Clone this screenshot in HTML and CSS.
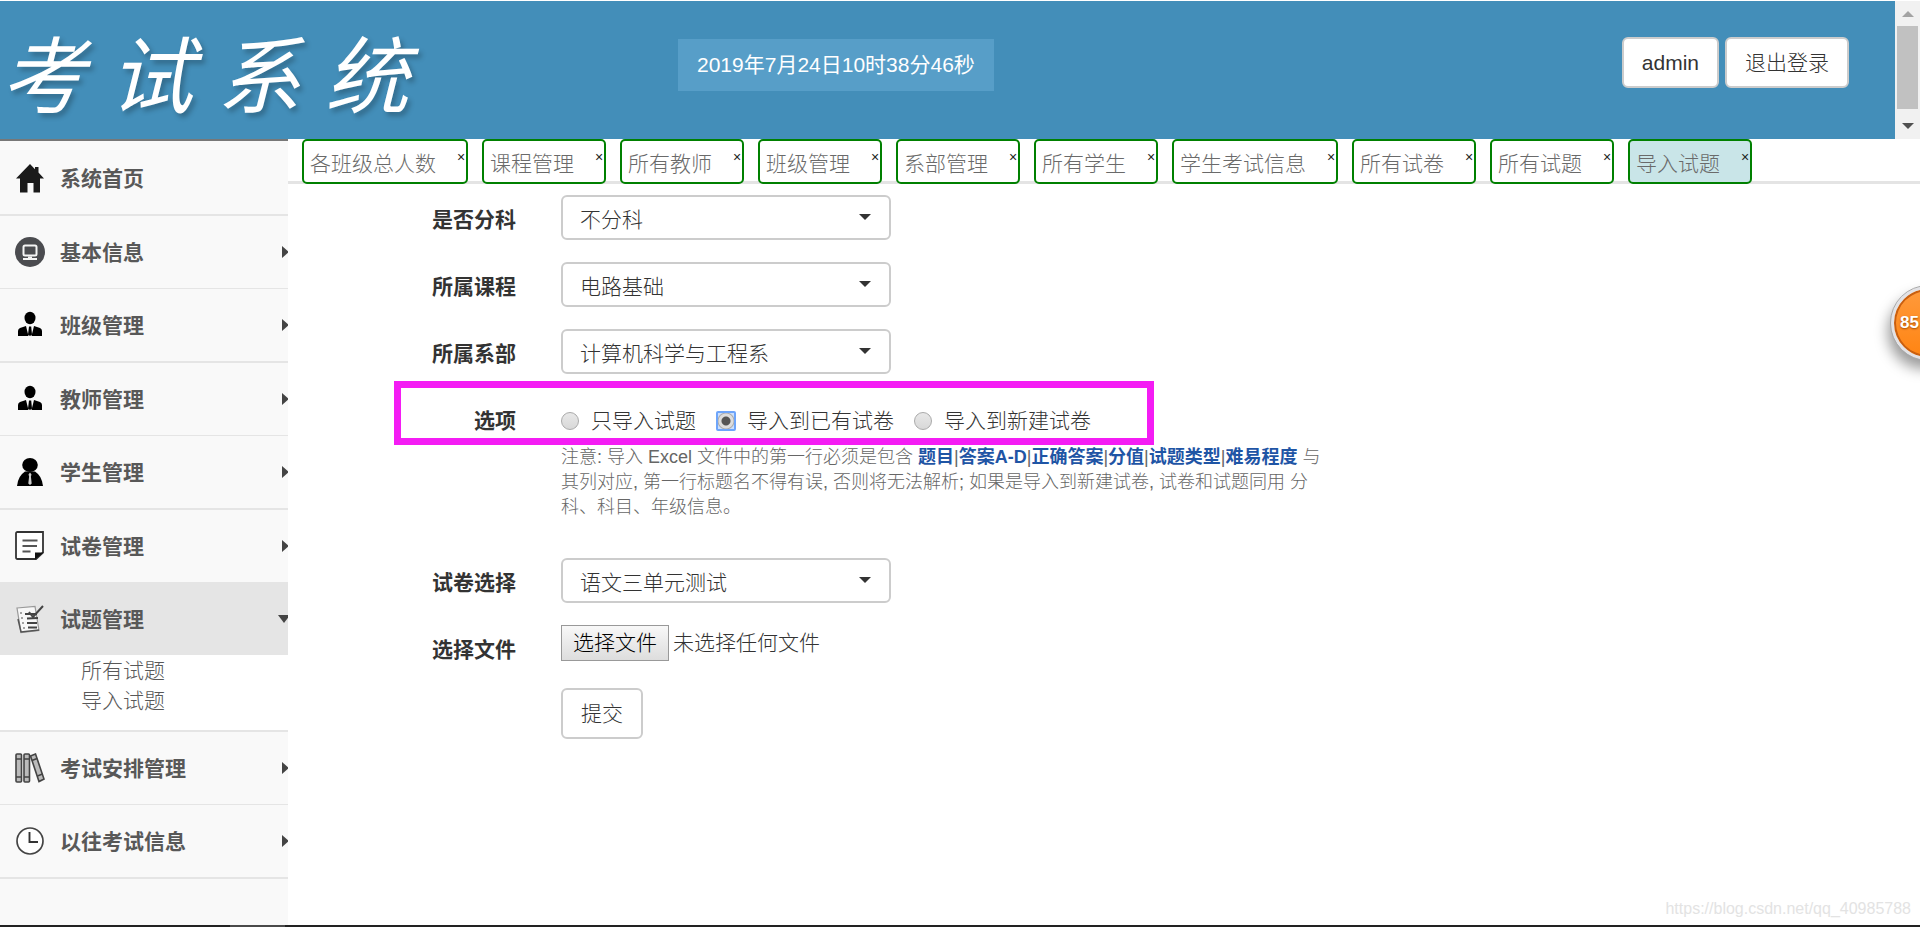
FILE: index.html
```html
<!DOCTYPE html>
<html lang="zh-CN">
<head>
<meta charset="utf-8">
<title>考试系统</title>
<link rel="stylesheet" href="styles.css">
</head>
<body>
<header class="header">
  <div class="banner">
    <h1 class="logo"><span>考</span><span>试</span><span>系</span><span>统</span></h1>
    <div class="clock">2019年7月24日10时38分46秒</div>
    <div class="account">
      <button class="btn" type="button">admin</button>
      <button class="btn" type="button">退出登录</button>
    </div>
  </div>
  <div class="scrollbar" aria-hidden="true">
    <i class="scroll-up"></i><i class="scroll-thumb"></i><i class="scroll-down"></i>
  </div>
</header>

<div class="body">
  <nav class="sidebar">
    <ul class="menu">
      <li class="menu-item thick"><a href="#">
        <svg class="icon" viewBox="0 0 30 30"><path fill="#1a1a1a" d="M15 1 1 15.500h4V29.500h7.500V20h6v9.500H25V15.500h4L23.500 9.500V4H20v2.200z"/></svg>
        <span>系统首页</span></a></li>
      <li class="menu-item"><a href="#">
        <svg class="icon" viewBox="0 0 30 30"><circle cx="15" cy="15" r="15" fill="#4b4c50"/><rect x="8.500" y="8.500" width="13" height="10" rx="1.500" fill="none" stroke="#f5f5f5" stroke-width="2"/><path fill="#f5f5f5" d="M13 19.500h4v1.500h5v2H8v-2h5z"/></svg>
        <span>基本信息</span><i class="arrow"></i></a></li>
      <li class="menu-item thick"><a href="#">
        <svg class="icon" viewBox="0 0 30 30"><ellipse cx="15" cy="8" rx="5.500" ry="6.200"/><path d="M3 26v-5q0-2 2-3l6-2 2.500 10zM27 26v-5q0-2-2-3l-6-2-2.500 10zM14 16.500h2.200l.8 8-2 1.500-2-1.500z"/></svg>
        <span>班级管理</span><i class="arrow"></i></a></li>
      <li class="menu-item"><a href="#">
        <svg class="icon" viewBox="0 0 30 30"><ellipse cx="15" cy="8" rx="5.500" ry="6.200"/><path d="M3 26v-5q0-2 2-3l6-2 2.500 10zM27 26v-5q0-2-2-3l-6-2-2.500 10zM14 16.500h2.200l.8 8-2 1.500-2-1.500z"/></svg>
        <span>教师管理</span><i class="arrow"></i></a></li>
      <li class="menu-item thick"><a href="#">
        <svg class="icon" viewBox="0 0 30 30"><ellipse cx="15" cy="8" rx="7.800" ry="7"/><path d="M2 29q1-10 8-14.500h10q7 4.500 8 14.500z"/><path d="M15 15.500l1.500 2-.6 2 .8 7-1.700 1.500-1.700-1.500.8-7-.6-2z" fill="#ccc"/></svg>
        <span>学生管理</span><i class="arrow"></i></a></li>
      <li class="menu-item"><a href="#">
        <svg class="icon" viewBox="0 0 30 30"><path d="M2.500 1h25.500v20.500L21 28H2.500Q1 28 1 26.500v-24Q1 1 2.500 1z" fill="#fff" stroke="#333" stroke-width="1.800"/><path d="M20 28.500V21.500h8.500z" fill="#111"/><path d="M7.500 9.500h15M7.500 15h14.500M7.500 20.500h8" stroke="#555" stroke-width="2"/></svg>
        <span>试卷管理</span><i class="arrow"></i></a></li>
      <li class="menu-item open"><a href="#">
        <svg class="icon" viewBox="0 0 30 30"><path d="M2 4l18-1.500 4 24L6 28.500z" fill="#f7f7f7" stroke="#999" stroke-width="1.200"/><path d="M3 15l3 13 18-2" fill="none" stroke="#555" stroke-width="1.500"/><path d="M10 10h12M12 14.500l11-.5M12 19h10M13 23.500h9" stroke="#444" stroke-width="2"/><path d="M14 8l4 5L28 2" fill="none" stroke="#444" stroke-width="2"/><path d="M5 9h2M6 14h2M7 19h2M8 24h2" stroke="#888" stroke-width="1.500"/></svg>
        <span>试题管理</span><i class="arrow"></i></a>
        <ul class="submenu">
          <li><a href="#">所有试题</a></li>
          <li><a href="#">导入试题</a></li>
        </ul></li>
      <li class="menu-item"><a href="#">
        <svg class="icon" viewBox="0 0 30 30"><g fill="#bbb" stroke="#444" stroke-width="1.600"><rect x="1" y="1" width="5.500" height="28" rx="1"/><rect x="9" y="1" width="5.500" height="28" rx="1"/><path d="M15.500 3l5-2L29 26l-5 2.500z"/></g><path d="M1 6h5.500M1 24h5.500M9 6h5.500M9 24h5.500M17 7.500l5-2M22.500 23l5-2" stroke="#444" stroke-width="1.400"/></svg>
        <span>考试安排管理</span><i class="arrow"></i></a></li>
      <li class="menu-item thick"><a href="#">
        <svg class="icon" viewBox="0 0 30 30"><circle cx="15" cy="15" r="13" fill="#fff" stroke="#444" stroke-width="1.700"/><path d="M14.500 6v10h8.500" fill="none" stroke="#333" stroke-width="1.900"/></svg>
        <span>以往考试信息</span><i class="arrow"></i></a></li>
    </ul>
  </nav>

  <main class="main">
    <div class="tabs">
      <div class="tab"><a href="#">各班级总人数</a><button class="close" type="button">×</button></div>
      <div class="tab"><a href="#">课程管理</a><button class="close" type="button">×</button></div>
      <div class="tab"><a href="#">所有教师</a><button class="close" type="button">×</button></div>
      <div class="tab"><a href="#">班级管理</a><button class="close" type="button">×</button></div>
      <div class="tab"><a href="#">系部管理</a><button class="close" type="button">×</button></div>
      <div class="tab"><a href="#">所有学生</a><button class="close" type="button">×</button></div>
      <div class="tab"><a href="#">学生考试信息</a><button class="close" type="button">×</button></div>
      <div class="tab"><a href="#">所有试卷</a><button class="close" type="button">×</button></div>
      <div class="tab"><a href="#">所有试题</a><button class="close" type="button">×</button></div>
      <div class="tab active"><a href="#">导入试题</a><button class="close" type="button">×</button></div>
    </div>

    <form class="form">
      <label class="label" for="division">是否分科</label>
      <div class="select"><select id="division"><option>不分科</option></select></div>

      <label class="label" for="course">所属课程</label>
      <div class="select"><select id="course"><option>电路基础</option></select></div>

      <label class="label" for="dept">所属系部</label>
      <div class="select"><select id="dept"><option>计算机科学与工程系</option></select></div>

      <div class="options">
        <span class="label" id="mode">选项</span>
        <div class="radios" role="radiogroup" aria-labelledby="mode">
          <label class="radio"><input type="radio" name="mode">只导入试题</label>
          <label class="radio"><input type="radio" name="mode" checked>导入到已有试卷</label>
          <label class="radio"><input type="radio" name="mode">导入到新建试卷</label>
        </div>
      </div>
      <p class="help">注意: 导入 Excel 文件中的第一行必须是包含 <b>题目</b>|<b>答案A-D</b>|<b>正确答案</b>|<b>分值</b>|<b>试题类型</b>|<b>难易程度</b> 与其列对应, 第一行标题名不得有误, 否则将无法解析; 如果是导入到新建试卷, 试卷和试题同用 分科、科目、年级信息。</p>

      <label class="label" for="paper">试卷选择</label>
      <div class="select"><select id="paper"><option>语文三单元测试</option></select></div>

      <label class="label" for="file">选择文件</label>
      <div class="file">
        <input class="file-input" id="file" type="file">
        <label class="file-btn" for="file">选择文件</label>
        <span>未选择任何文件</span>
      </div>

      <button class="btn submit" type="submit">提交</button>
    </form>
  </main>
</div>

<footer class="taskbar"><i></i></footer>
<div class="ball">85</div>
<div class="watermark">https://blog.csdn.net/qq_40985788</div>
</body>
</html>
```
FILE: styles.css
```css
*, *::before, *::after { box-sizing: border-box; }

body {
  margin: 0;
  min-height: 100vh;
  display: flex;
  flex-direction: column;
  position: relative;
  overflow: hidden;
  background: #fff;
  color: #333;
  font: 300 21px/30px "Liberation Sans", "Noto Sans CJK SC", sans-serif;
}

a { color: inherit; text-decoration: none; }
ul { margin: 0; padding: 0; list-style: none; }
button, select, input { font: inherit; color: inherit; }

.header {
  display: flex;
  height: 139px;
  border-top: 1px solid #fff;
}
.banner {
  flex: 1;
  display: grid;
  grid-template-columns: 678px auto 1fr;
  align-items: start;
  background: #438eb9;
}
.logo {
  display: flex;
  gap: 24px;
  margin: 0;
  padding: 20px 0 0 1px;
  font: italic 400 84px/100px "Noto Sans CJK SC", sans-serif;
  color: #fff;
  text-shadow: 3px 4px 5px rgba(0, 0, 0, .25);
}
.clock {
  margin-top: 38px;
  padding: 11px 19px;
  background: #579ec8;
  color: #fff;
  font-weight: 400;
}
.account {
  display: flex;
  justify-content: flex-end;
  gap: 6px;
  padding: 36px 46px 0 0;
}
.btn {
  height: 51px;
  padding: 0 18px;
  border: 2px solid #ccc;
  border-radius: 6px;
  background: #fff;
}

.scrollbar {
  width: 25px;
  padding: 10px 0;
  display: flex;
  flex-direction: column;
  align-items: center;
  justify-content: space-between;
  background: #f1f1f1;
}
.scroll-thumb { width: 21px; height: 83px; margin-bottom: 5px; background: #c1c1c1; }
.scroll-up, .scroll-down { border: 6px solid transparent; }
.scroll-up { border-top: 0; border-bottom-color: #a3a3a3; }
.scroll-down { border-bottom: 0; border-top-color: #505050; }

.body { flex: 1; display: flex; }

.sidebar {
  width: 288px;
  padding-top: 1px;
  overflow: hidden;
  border-top: 2px solid #777;
  background: #f9f9f9;
  color: #585858;
}
.menu-item { border-bottom: 1px solid #e5e5e5; }
.menu-item.thick { border-bottom-width: 2px; }
.menu-item > a {
  display: flex;
  align-items: center;
  gap: 15px;
  height: 72px;
  padding-left: 15px;
  font-weight: 700;
}
.menu-item > a span { padding-top: 2px; }
.icon { width: 30px; height: 30px; }
.arrow {
  margin-left: auto;
  margin-right: -1px;
  border: 6px solid transparent;
  border-left: 7px solid #444;
  border-right: 0;
}
.open { border-bottom-width: 2px; }
.open > a { background: #e5e5e5; }
.open .arrow {
  margin-right: -2px;
  border: 6px solid transparent;
  border-top: 8px solid #444;
  border-bottom: 0;
}
.submenu {
  height: 75px;
  padding: 1px 0 0 81px;
  background: #fff;
}
.submenu a { display: block; line-height: 30px; }

.main { flex: 1; min-width: 0; }

.tabs {
  display: flex;
  gap: 14px;
  height: 45px;
  padding-left: 14px;
  border-bottom: 3px solid #e4e4e4;
}
.tab {
  display: flex;
  justify-content: space-between;
  flex: none;
  gap: 21px;
  height: 45px;
  padding: 8px 1px 0 6px;
  border: 2px solid #008000;
  border-radius: 5px;
  background: #fff;
  color: #6a6a6a;
}
.tab.active { background: #c9e5e8; }
.close {
  width: 8px;
  height: 16px;
  padding: 0;
  border: 0;
  background: none;
  color: #222;
  font-size: 14px;
  line-height: 16px;
}

.form {
  display: grid;
  grid-template-columns: 228px 768px;
  column-gap: 45px;
  row-gap: 22px;
  padding-top: 11px;
}
.label {
  padding-top: 10px;
  text-align: right;
  font-weight: 700;
}
.select {
  position: relative;
  width: 330px;
}
.select select {
  display: block;
  width: 100%;
  height: 45px;
  padding: 4px 17px 0;
  border: 2px solid #ccc;
  border-radius: 6px;
  background: #fff;
  appearance: none;
}
.select::after {
  content: "";
  position: absolute;
  right: 20px;
  top: 19px;
  border: 6px solid transparent;
  border-top-color: #333;
  border-bottom: 0;
}

.options {
  position: relative;
  grid-column: 1 / 3;
  display: grid;
  grid-template-columns: subgrid;
  height: 40px;
}
.options::after {
  content: "";
  position: absolute;
  left: 106px;
  top: -15px;
  width: 760px;
  height: 64px;
  border: 7px solid #f41cf4;
  pointer-events: none;
}
.radios {
  display: flex;
  gap: 20px;
  padding-top: 10px;
}
.radio { display: flex; align-items: center; }
.radio input {
  appearance: none;
  width: 18px;
  height: 18px;
  margin: 0 12px 0 0;
  border: 1px solid #aaa;
  border-radius: 50%;
  background: linear-gradient(#e8e8e8, #d8d8d8);
}
.radio input:checked {
  width: 20px;
  height: 20px;
  margin-right: 11px;
  border: 2px solid #6ea5fa;
  border-radius: 2px;
  background: radial-gradient(circle, #555 0 4px, #ddd 5px 7px, #aaa 8px, #cbdffc 9px);
}
.help {
  grid-column: 2;
  margin: -13px 0 16px;
  color: #666;
  font-size: 18px;
  line-height: 25px;
}
.help b { color: #1f55a5; font-weight: 700; }

.file {
  display: flex;
  align-items: flex-start;
  gap: 4px;
  position: relative;
  height: 41px;
}
.file span { padding-top: 3px; }
.file-input {
  position: absolute;
  width: 1px;
  height: 1px;
  opacity: 0;
}
.file-btn {
  padding: 2px 11px;
  border: 1px solid #999;
  background: linear-gradient(#f8f8f8, #ddd);
  color: #000;
}
.submit { grid-column: 2; justify-self: start; }

.taskbar { height: 2px; padding-left: 230px; background: #222; }
.taskbar i { display: block; width: 55px; height: 2px; background: #4a4a4a; }

.ball {
  position: absolute;
  right: -45px;
  top: 286px;
  width: 74px;
  height: 74px;
  padding-left: 6px;
  border: 3px solid #e2e2e6;
  border-radius: 50%;
  outline: 1px solid #aaa;
  background: linear-gradient(#ff9a3c, #ff8412);
  box-shadow: inset 0 0 0 2px #c95f10, -3px 9px 14px rgba(0, 0, 0, .4);
  color: #fff;
  font-size: 17px;
  font-weight: 700;
  line-height: 68px;
  text-shadow: 0 1px 2px #a04a00;
}
.watermark {
  position: absolute;
  right: 9px;
  bottom: 3px;
  color: #e3e3e3;
  font-size: 16px;
}
```
